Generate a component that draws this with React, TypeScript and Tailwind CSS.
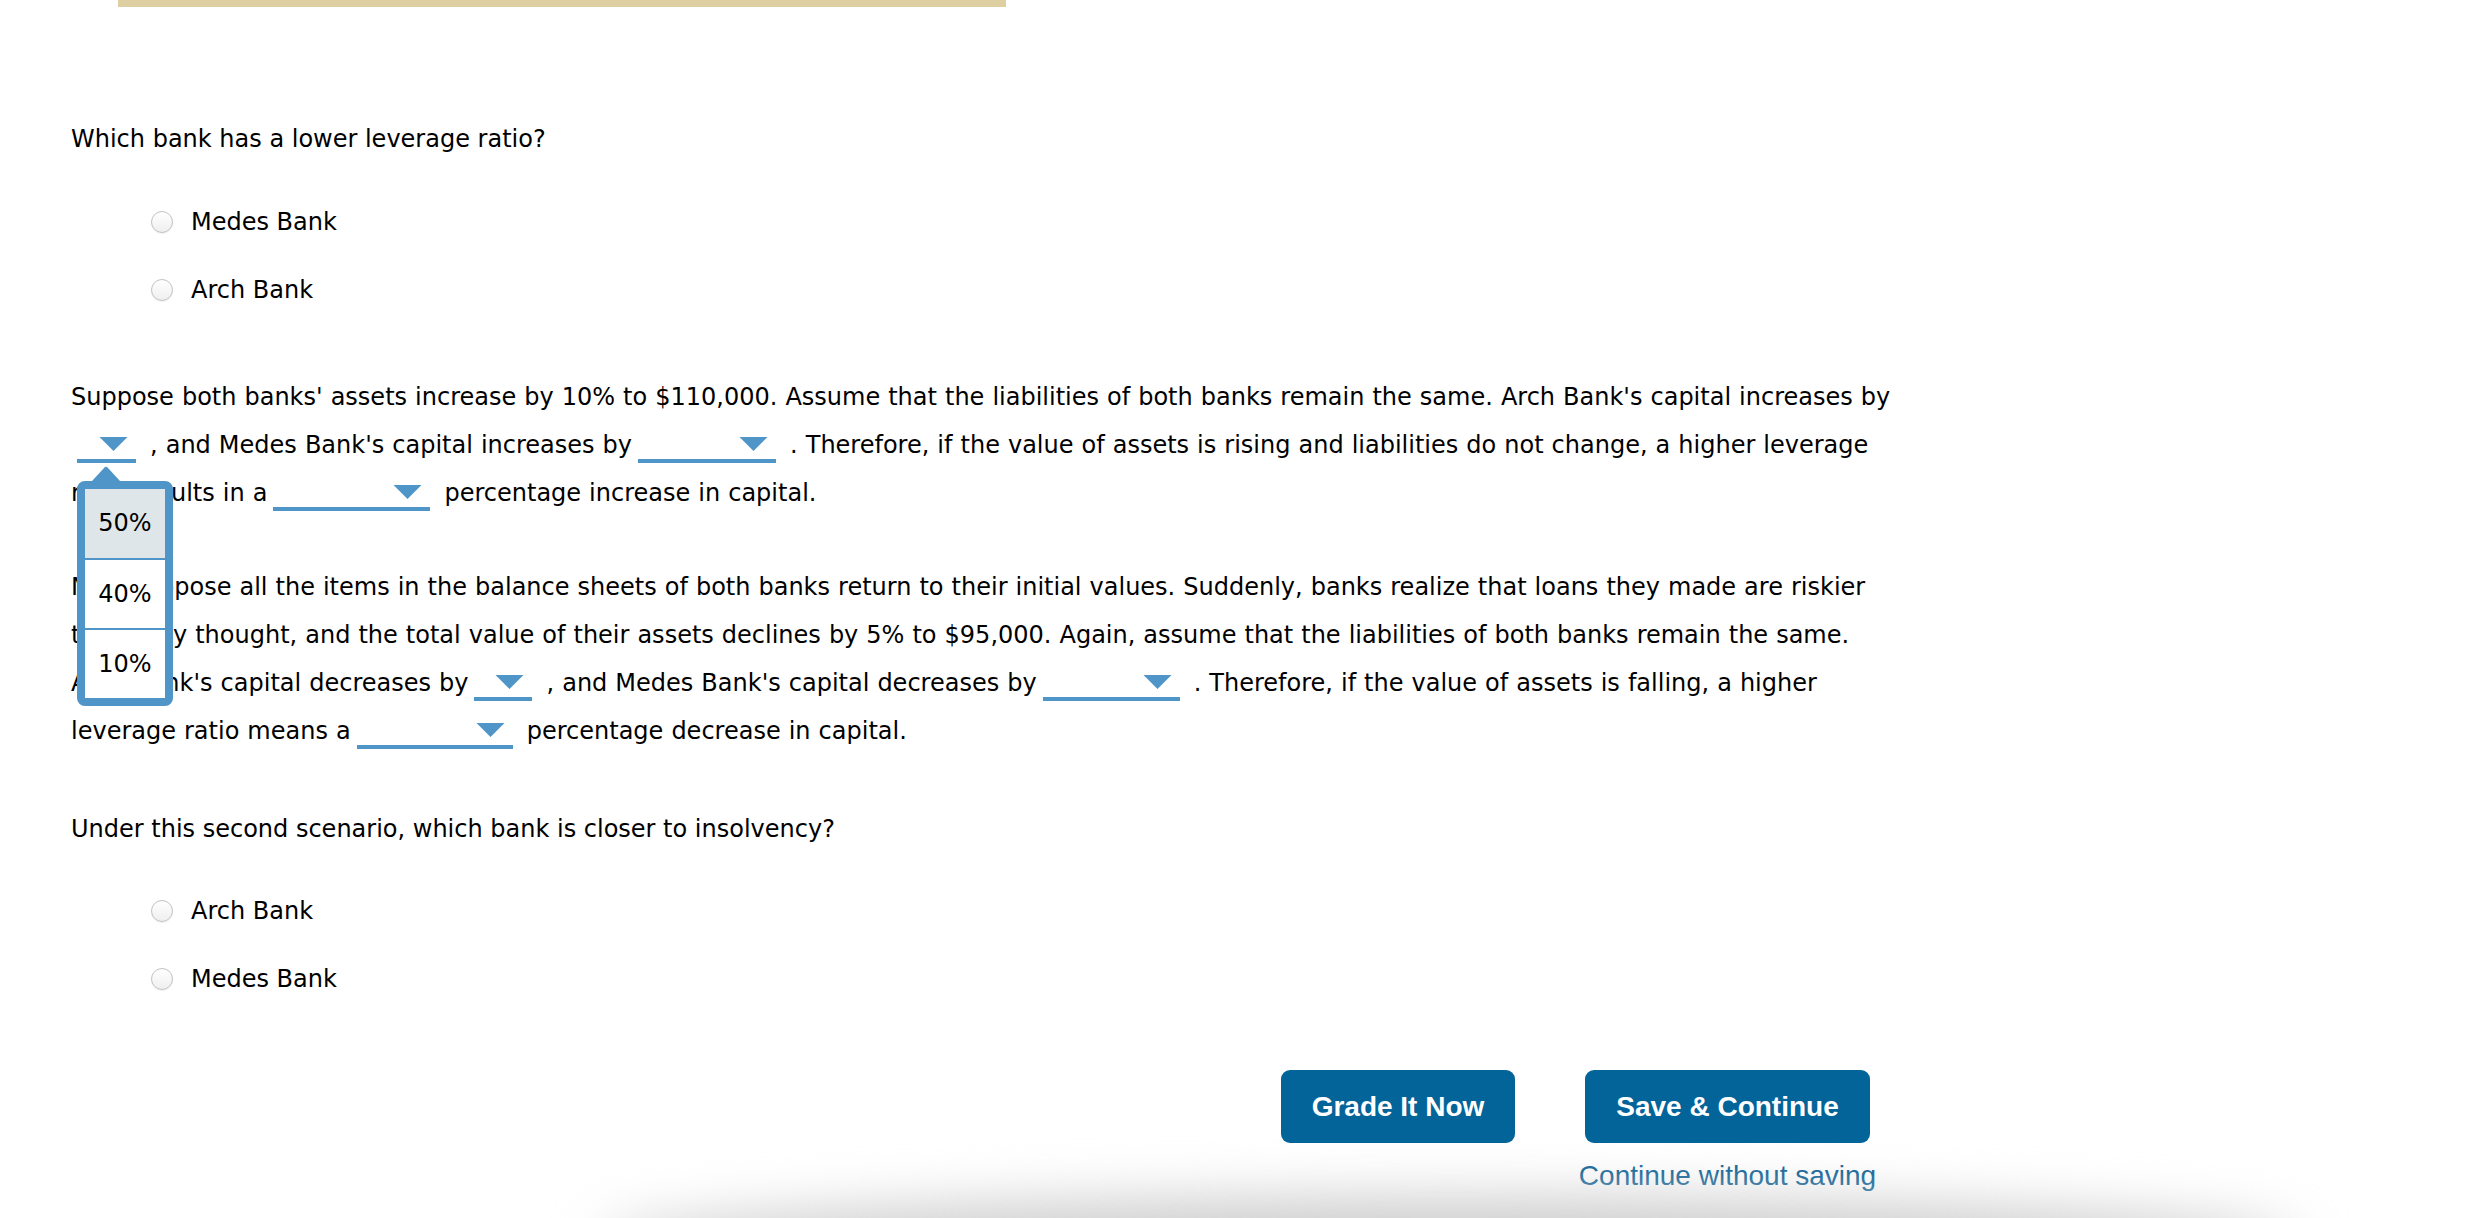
import React from "react";

// Small downward caret shown at the right end of each answer blank
function Caret() {
  return (
    <svg
      width="29"
      height="14"
      viewBox="0 0 29 14"
      className="absolute right-[8px] top-0 block"
    >
      <path d="M0.5 0 H28.5 L14.5 14 Z" fill="#4f95c7" />
    </svg>
  );
}

// Open option list hanging under a blank
function OptionMenu() {
  const options = ["50%", "40%", "10%"];
  return (
    <span className="absolute left-0 top-full z-10 mt-[7px] block w-[96px]">
      <svg width="96" height="15" viewBox="0 0 96 15" className="block">
        <path d="M15 15 L27.5 1.6 Q29 0 30.5 1.6 L43 15 Z" fill="#4f95c7" />
      </svg>
      <span className="block overflow-hidden rounded-[8px] border-[8px] border-[#4f95c7] bg-white">
        {options.map((o, i) => (
          <span
            key={o}
            className={
              i === 0
                ? "block h-[69px] bg-[#dfe6e9] text-center leading-[69px]"
                : "block h-[70px] border-t-2 border-[#4f95c7] text-center leading-[68px]"
            }
          >
            {o}
          </span>
        ))}
      </span>
    </span>
  );
}

// Inline drop-down blank: an underline with a caret
function Blank({ w, open }: { w: string; open?: boolean }) {
  return (
    <span
      className={`relative mx-[6px] inline-block h-[26px] border-b-4 border-[#4f95c7] align-[-10px] [word-spacing:0] ${w}`}
    >
      <Caret />
      {open && <OptionMenu />}
    </span>
  );
}

function Radio({ label }: { label: string }) {
  return (
    <div className="flex h-[48px] items-center pl-[80px]">
      <span className="block h-[22px] w-[22px] rounded-full border border-[#c2c2c2] bg-linear-to-b from-white to-[#efefef] shadow-[0_1px_1px_rgba(0,0,0,0.06)]" />
      <span className="ml-[18px]">{label}</span>
    </div>
  );
}

export default function App() {
  return (
    <div className="relative h-[1218px] overflow-hidden bg-white font-['DejaVu_Sans',sans-serif] text-[24px] leading-[48px] text-black">
      <div className="ml-[118px] h-[7px] w-[888px] bg-[#decfa3]" />

      <div className="pl-[71px]">
        <div className="mt-[108px]">Which bank has a lower leverage ratio?</div>
        <div className="mt-[35px] flex flex-col gap-[20px]">
          <Radio label="Medes Bank" />
          <Radio label="Arch Bank" />
        </div>

        <div className="mt-[59px] whitespace-nowrap [word-spacing:0.4px]">
          Suppose both banks' assets increase by 10% to $110,000. Assume that the
          liabilities of both banks remain the same. Arch Bank's capital increases by
          <br />
          <Blank w="w-[59px]" open />
          {" "}, and Medes Bank's capital increases by
          <Blank w="w-[138px]" />
          {" "}. Therefore, if the value of assets is rising and liabilities do not
          change, a higher leverage
          <br />
          ratio results in a
          <Blank w="w-[157px]" />
          {" "}percentage increase in capital.
        </div>

        <div className="mt-[46px] whitespace-nowrap [word-spacing:0.4px]">
          Now suppose all the items in the balance sheets of both banks return to their
          initial values. Suddenly, banks realize that loans they made are riskier
          <br />
          than they thought, and the total value of their assets declines by 5% to
          $95,000. Again, assume that the liabilities of both banks remain the same.
          <br />
          Arch Bank's capital decreases by
          <Blank w="w-[58px]" />
          {" "}, and Medes Bank's capital decreases by
          <Blank w="w-[137px]" />
          {" "}. Therefore, if the value of assets is falling, a higher
          <br />
          leverage ratio means a
          <Blank w="w-[156px]" />
          {" "}percentage decrease in capital.
        </div>

        <div className="mt-[50px]">
          Under this second scenario, which bank is closer to insolvency?
        </div>
        <div className="mt-[34px] flex flex-col gap-[20px]">
          <Radio label="Arch Bank" />
          <Radio label="Medes Bank" />
        </div>

        <div className="mt-[67px] flex w-[1799px] items-start justify-end gap-[70px] font-['Liberation_Sans',Arial,sans-serif]">
          <button className="h-[73px] w-[234px] rounded-[9px] bg-[#03649a] text-[28px] font-bold leading-[73px] text-white">
            Grade It Now
          </button>
          <div className="flex w-[285px] flex-col items-center">
            <button className="h-[73px] w-[285px] rounded-[9px] bg-[#03649a] text-[28px] font-bold leading-[73px] text-white">
              Save &amp; Continue
            </button>
            <a className="mt-[17px] whitespace-nowrap text-[28px] leading-[32px] text-[#0b6196]">
              Continue without saving
            </a>
          </div>
        </div>
      </div>

      {/* soft shadow cast by the footer bar just below the fold */}
      <div className="pointer-events-none absolute left-[600px] right-[170px] top-[1196px] h-[90px] rounded-[50%] bg-[#cfcfcf] blur-[26px]" />
    </div>
  );
}
